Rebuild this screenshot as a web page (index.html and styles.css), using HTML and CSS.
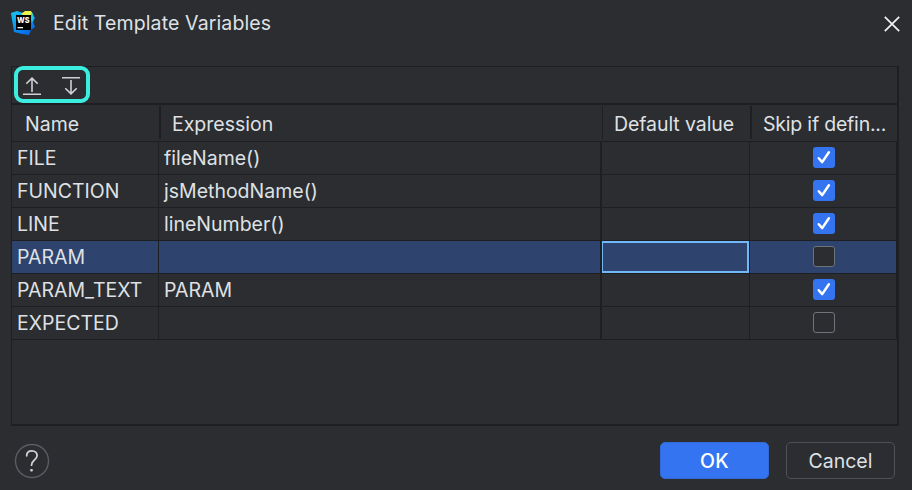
FILE: index.html
```html
<!DOCTYPE html>
<html lang="en">
<head>
<meta charset="utf-8">
<title>Edit Template Variables</title>
<link rel="stylesheet" href="styles.css">
</head>
<body>
<div class="dialog">
  <header class="titlebar">
    <svg class="logo" width="26" height="26" viewBox="0 0 26 26">
      <defs>
        <linearGradient id="g" x1="0" y1="0" x2=".6" y2="1"><stop offset="0" stop-color="#17c8f0"/><stop offset=".5" stop-color="#0b9df0"/><stop offset="1" stop-color="#0768e8"/></linearGradient>
      </defs>
      <path fill="url(#g)" d="M1 3 7 1l6 2 9-1 3 6-2 4 2 5-4 3-2 5-7-1-8-2z"/>
      <path fill="#e9f348" d="M11 4 15 1l6 0 2 4-3 3z"/>
      <path fill="#22c7e4" d="m22 3 2 5-2 5-2-7z"/>
      <path fill="#000" d="M6 5h15v15H6z"/>
      <text class="logo-text" x="7" y="13" textLength="12.5" lengthAdjust="spacingAndGlyphs">WS</text>
      <path fill="#fff" d="M7.500 17h5.500v1.300H7.500z"/>
    </svg>
    <h1 class="title">Edit Template Variables</h1>
    <svg class="close" width="16" height="16" viewBox="0 0 16 16"><path d="m.8.8 14.4 14.4M15.200.8.8 15.200"/></svg>
  </header>
  <main class="panel">
    <div class="toolbar">
      <div class="highlight">
        <svg class="tool" width="20" height="20" viewBox="0 0 20 20"><path d="M1 18.200h18M10 16V2.200M4.300 7.800 10 2.100l5.700 5.700"/></svg>
        <svg class="tool" width="20" height="20" viewBox="0 0 20 20"><path d="M1 1.800h18M10 4v13.800M4.300 12.200 10 17.900l5.700-5.700"/></svg>
      </div>
    </div>
    <div class="head">
      <div class="th">Name</div><div class="th">Expression</div><div class="th">Default value</div><div class="th">Skip if defin...</div>
    </div>
    <div class="row"><div class="td">FILE</div><div class="td">fileName()</div><div class="td"></div><div class="td"><span class="check on"><svg viewBox="0 0 22 22"><path d="m5.500 11.800 3.600 4 7-10.300"/></svg></span></div></div>
    <div class="row"><div class="td">FUNCTION</div><div class="td">jsMethodName()</div><div class="td"></div><div class="td"><span class="check on"><svg viewBox="0 0 22 22"><path d="m5.500 11.800 3.600 4 7-10.300"/></svg></span></div></div>
    <div class="row"><div class="td">LINE</div><div class="td">lineNumber()</div><div class="td"></div><div class="td"><span class="check on"><svg viewBox="0 0 22 22"><path d="m5.500 11.800 3.600 4 7-10.300"/></svg></span></div></div>
    <div class="row selected"><div class="td">PARAM</div><div class="td"></div><div class="td"><div class="focus"></div></div><div class="td"><span class="check"></span></div></div>
    <div class="row"><div class="td">PARAM_TEXT</div><div class="td">PARAM</div><div class="td"></div><div class="td"><span class="check on"><svg viewBox="0 0 22 22"><path d="m5.500 11.800 3.600 4 7-10.300"/></svg></span></div></div>
    <div class="row"><div class="td">EXPECTED</div><div class="td"></div><div class="td"></div><div class="td"><span class="check"></span></div></div>
  </main>
  <footer class="actions">
    <svg class="help" width="36" height="36" viewBox="0 0 36 36"><circle cx="18" cy="18" r="16.500"/><path d="M12.700 12.800c0-3.100 2.200-4.900 5.200-4.900s5.200 1.900 5.200 4.700c0 2.300-1.300 3.400-2.900 4.700-1.700 1.400-2.700 2.400-2.700 4.900"/><rect x="16.200" y="26" width="2.600" height="2.600" rx=".8"/></svg>
    <button class="btn primary">OK</button>
    <button class="btn">Cancel</button>
  </footer>
</div>
</body>
</html>
```

FILE: styles.css
```css
* { box-sizing: border-box; }
body {
  margin: 0;
  background: #2b2d30;
  color: #dfe1e5;
  font: 19.5px/24px Inter, sans-serif;
}
.dialog {
  width: 912px;
  height: 490px;
  display: flex;
  flex-direction: column;
  overflow: hidden;
}
.titlebar {
  height: 66px;
  padding: 10px 12.5px 0 10px;
  display: flex;
  align-items: flex-start;
}
.logo-text { font: 800 8px Inter, sans-serif; fill: #fff; }
.title {
  margin: 1px 0 0 17px;
  font-size: 19.5px;
  font-weight: 400;
  letter-spacing: .12px;
  flex: 1;
}
.close { margin-top: 5.5px; fill: none; stroke: #f0f1f2; stroke-width: 1.7; }
.panel {
  width: 888px;
  height: 360px;
  margin-left: 11px;
  border: solid #1e1f22;
  border-width: 1px 2px 2px 1px;
}
.toolbar {
  height: 38px;
  padding-left: 2px;
  border-bottom: 2px solid #1e1f22;
}
.toolbar { height: 39px; }
.highlight {
  width: 76px;
  height: 37px;
  margin-top: -1px;
  border: 4px solid #3beee0;
  border-radius: 9px;
  display: flex;
  align-items: center;
  justify-content: space-between;
  padding: 2px 5px 0 4px;
}
.tool { fill: none; stroke: #ced0d6; stroke-width: 1.6; }
.head, .row {
  display: grid;
  grid-template-columns: 147px 443px 148px 147px;
  border-bottom: 1px solid #1e1f22;
}
.head {
  grid-template-columns: 149px 442px 149px 145px;
  height: 37px;
  padding: 1px 0 2px;
}
.th { padding: 6px 0 0 11px; border-right: 2px solid #1e1f22; white-space: nowrap; }
.th:first-child { padding-left: 13px; }
.th:nth-child(2) { border-right-width: 1px; }
.th:nth-child(3) { letter-spacing: -.08px; }
.th:last-child { border: 0; letter-spacing: -.2px; }
.row { height: 33px; width: 885px; }
.td {
  border-right: 1px solid #1e1f22;
  padding: 4px 0 0 5px;
  white-space: nowrap;
}
.td:nth-child(2) { border-right-width: 2px; }
.td:nth-child(3) { padding: 0; }
.td:last-child { padding: 5px 0 0 63px; }
.selected .td { background: #2e436e; }
.focus {
  height: 32px;
  border: 2px solid #70b8f8;
  border-left-width: 1px;
}
.check {
  display: block;
  width: 22px;
  height: 21px;
  border: 1.5px solid #6f737a;
  border-radius: 3px;
  background: #2b2d30;
}
.check.on { border: 0; background: #3574f0; }
.check svg { display: block; width: 22px; height: 21px; fill: none; stroke: #fff; stroke-width: 2.6; stroke-linecap: round; stroke-linejoin: round; }
.actions {
  display: flex;
  padding: 16px 17px 0 14px;
  gap: 17px;
}
.help { margin: 1px auto 0 0; fill: none; stroke: #5a5d63; stroke-width: 1.4; }
.help path { stroke: #ced0d6; stroke-width: 1.8; stroke-linecap: round; }
.help rect { fill: #ced0d6; stroke: none; }
.btn {
  width: 109px;
  height: 37px;
  padding: 0;
  border: 1.5px solid #4e5157;
  border-radius: 5px;
  background: transparent;
  color: #dfe1e5;
  font: 19.5px/24px Inter, sans-serif;
}
.primary { background: #3574f0; border-color: #3369d6; color: #fff; font-weight: 500; letter-spacing: .4px; }
```
